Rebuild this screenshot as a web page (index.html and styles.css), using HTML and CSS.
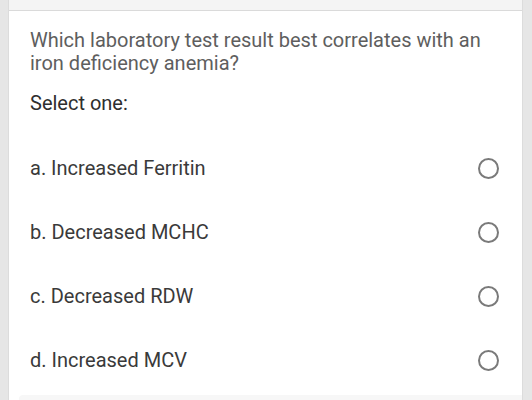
FILE: index.html
```html
<!DOCTYPE html>
<html lang="en">
<head>
    <meta charset="UTF-8">
    <meta name="viewport" content="width=device-width, initial-scale=1.0">
    <title>Quiz Question</title>
    <link rel="stylesheet" href="styles.css">
</head>
<body>
    <div class="page">
        <div class="topbar"></div>
        <div class="question">
            <p class="qtext">Which laboratory test result best correlates with an iron deficiency anemia?</p>
            <p class="prompt">Select one:</p>
            <div class="answers">
                <label class="answer">
                    <span>a. Increased Ferritin</span>
                    <span class="radio"></span>
                </label>
                <label class="answer">
                    <span>b. Decreased MCHC</span>
                    <span class="radio"></span>
                </label>
                <label class="answer">
                    <span>c. Decreased RDW</span>
                    <span class="radio"></span>
                </label>
                <label class="answer">
                    <span>d. Increased MCV</span>
                    <span class="radio"></span>
                </label>
            </div>
            <div class="footer"></div>
        </div>
    </div>
</body>
</html>
```

FILE: styles.css
```css
body {
    margin: 0;
    padding: 0;
    font-family: Roboto, "Liberation Sans", sans-serif;
    background-color: #e6e6e6;
    height: 400px;
    overflow: hidden;
}
.page {
    margin: 0 9px 0 8px;
    background: #fff;
    height: 100%;
    border-left: 1px solid #dcdcdc;
    border-right: 1px solid #dcdcdc;
}
.topbar {
    height: 10px;
    background: #f4f4f4;
    border-bottom: 1px solid #dadada;
}
.question {
    padding: 18px 0 0 21px;
}
.qtext {
    margin: 0;
    font-size: 20px;
    line-height: 23px;
    color: #5e5e5e;
    padding-right: 20px;
}
.prompt {
    margin: 17px 0 0;
    font-size: 20px;
    line-height: 23px;
    color: #2e2e2e;
}
.answers {
    margin-top: 21px;
}
.answer {
    display: flex;
    align-items: center;
    justify-content: space-between;
    height: 64px;
    font-size: 20px;
    color: #3a3a3a;
    padding-right: 23px;
}
.radio {
    width: 17px;
    height: 17px;
    border: 2px solid #7a7a7a;
    border-radius: 50%;
}
.footer {
    margin: 3px 0 0 -11px;
    height: 10px;
    background: #f7f7f7;
    border-radius: 4px 0 0 0;
}
```
